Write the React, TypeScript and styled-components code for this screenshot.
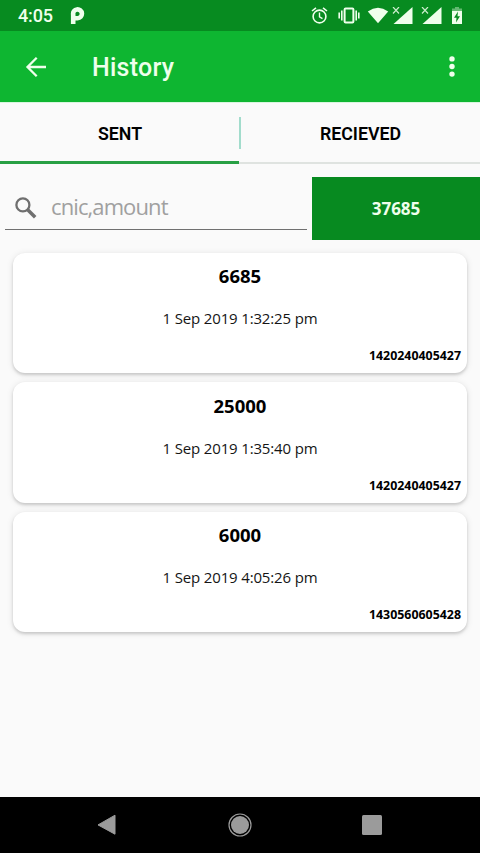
import React from 'react';
import styled, { createGlobalStyle } from 'styled-components';

const GlobalStyle = createGlobalStyle`
  * { box-sizing: border-box; }
  body { margin: 0; background: #fafafa; }
`;

const Screen = styled.div`
  display: flex;
  flex-direction: column;
  width: 480px;
  height: 853px;
  overflow: hidden;
  background: #fafafa;
  color: #000;
  font-family: 'Open Sans', 'Noto Sans', sans-serif;
`;

const StatusBar = styled.header`
  display: flex;
  align-items: center;
  height: 31px;
  flex: none;
  padding: 0 17px 0 18px;
  background: #078b20;
  color: #efffec;
`;

const Clock = styled.span`
  width: 52px;
  font: 500 18px/31px Roboto, sans-serif;
  letter-spacing: -0.15px;
`;

const StatusIcons = styled.div`
  display: flex;
  margin: 1px 0 0 auto;
`;

const Icon = styled.svg<{ $gap?: number }>`
  display: block;
  flex: none;
  margin-left: ${({ $gap = 0 }) => $gap}px;
`;

const AppBar = styled.div`
  display: flex;
  align-items: center;
  flex: none;
  height: 71px;
  padding: 0 22px 0 24px;
  background: #0eb631;
  color: #efffec;
`;

const Title = styled.h1`
  flex: 1;
  margin: 3px 0 0 44px;
  font: 500 25px/32px Roboto, sans-serif;
  letter-spacing: 0.25px;
`;

const IconButton = styled.button`
  display: flex;
  padding: 0;
  border: 0;
  background: none;
  color: inherit;
`;

const Tabs = styled.nav`
  display: grid;
  grid-template-columns: 239px 2px 239px;
  flex: none;
  height: 62px;
  border-top: 1px solid #d9f5df;
`;

const Tab = styled.button<{ $active?: boolean }>`
  padding: ${({ $active }) => ($active ? '3px 0 0 1px' : '3px 0 0')};
  border: 0;
  border-bottom: ${({ $active }) => ($active ? '3px solid #28a044' : '2px solid #dfe3e0')};
  background: none;
  color: #000;
  font: 600 17.8px/22px Roboto, sans-serif;
`;

const TabDivider = styled.div`
  border-bottom: 2px solid #dfe3e0;
  &::before {
    content: '';
    display: block;
    height: 32px;
    margin-top: 14px;
    background: #a2dccc;
  }
`;

const SearchRow = styled.div`
  display: flex;
  flex: none;
  height: 63px;
  margin-top: 13px;
`;

const SearchField = styled.label`
  display: flex;
  align-items: center;
  width: 302px;
  height: 53px;
  margin: 0 5px;
  padding: 8px 0 0 9px;
  border-bottom: 1px solid #707070;
`;

const SearchInput = styled.input`
  flex: 1;
  min-width: 0;
  height: 34px;
  margin: -2px 0 0 14px;
  padding: 0;
  border: 0;
  outline: 0;
  background: none;
  font: 400 22px/34px 'Open Sans', sans-serif;
  letter-spacing: -0.9px;
  &::placeholder { color: #a0a0a0; opacity: 1; }
`;

const Total = styled.div`
  flex: 1;
  background: #078a20;
  color: #efffec;
  font-size: 17px;
  font-weight: 700;
  line-height: 64px;
  text-align: center;
`;

const List = styled.main`
  display: flex;
  flex: 1;
  flex-direction: column;
  gap: 9px;
  padding: 13px 13px 0;
`;

const Card = styled.article`
  display: flex;
  flex-direction: column;
  align-items: center;
  height: 120.3px;
  border-radius: 12px;
  background: #fff;
  box-shadow: 0 2px 3px rgba(0, 0, 0, 0.15), 0 1px 7px rgba(0, 0, 0, 0.1);
`;

const Amount = styled.strong`
  margin-top: 10.4px;
  font-size: 18.5px;
  line-height: 26px;
`;

const SentAt = styled.time`
  margin-top: 18px;
  color: #151515;
  font-size: 15px;
  line-height: 22px;
  letter-spacing: -0.16px;
`;

const Cnic = styled.span`
  align-self: flex-end;
  margin: 18px 6px 0 0;
  font-size: 12.4px;
  font-weight: 700;
  line-height: 18px;
`;

const NavBar = styled.footer`
  display: flex;
  align-items: center;
  justify-content: space-between;
  flex: none;
  height: 56px;
  padding: 0 98px 0 97px;
  background: #000;
  color: #9b9b9b;
`;

const SignalIcon = ({ gap }: { gap: number }) => (
  <Icon $gap={gap} width="21" height="18" viewBox="0 0 21 18">
    <path d="M20.5 0V17H1.5Z" fill="currentColor" />
    <path d="M0 0H8.5V7.5L5 11H0Z" fill="#078b20" />
    <path d="M1 0l6 6.5M7 0L1 6.5" stroke="currentColor" strokeWidth="1.2" opacity=".85" />
  </Icon>
);

const records = [
  { amount: '6685', date: '1 Sep 2019 1:32:25 pm', cnic: '1420240405427' },
  { amount: '25000', date: '1 Sep 2019 1:35:40 pm', cnic: '1420240405427' },
  { amount: '6000', date: '1 Sep 2019 4:05:26 pm', cnic: '1430560605428' },
];

export default function App() {
  return (
    <Screen>
      <GlobalStyle />
      <StatusBar>
        <Clock>4:05</Clock>
        <Icon width="16" height="18" viewBox="0 0 16 18">
          <path d="M3.2 17V7.6A4.4 4.4 0 1 1 7.6 11.2H5" fill="none" stroke="currentColor" strokeWidth="4.6" />
        </Icon>
        <StatusIcons>
          <Icon width="17" height="18" viewBox="0 0 17 18" fill="none" stroke="currentColor">
            <circle cx="8.5" cy="9.5" r="6.4" strokeWidth="1.6" />
            <path d="M8.5 5.5v4.3l3 1.8" strokeWidth="1.4" />
            <path d="M1 4L5 .8M12 .8l4 3.2" strokeWidth="1.6" />
          </Icon>
          <Icon $gap={10} width="22" height="18" viewBox="0 0 22 18" fill="none" stroke="currentColor">
            <rect x="6.6" y="1.5" width="8.8" height="14" rx="1" strokeWidth="2" />
            <path d="M3.8 3.5v10M18.2 3.5v10" strokeWidth="1.6" />
            <path d="M1.2 5.5v6M20.8 5.5v6" strokeWidth="1.6" />
          </Icon>
          <Icon $gap={7} width="22" height="18" viewBox="0 0 22 18">
            <path d="M.8 4.4Q11-2.8 21.2 4.4L11 16.3Z" fill="currentColor" />
          </Icon>
          <SignalIcon gap={3} />
          <SignalIcon gap={8} />
          <Icon $gap={9} width="12" height="18" viewBox="0 0 12 18">
            <path d="M4 0h4v1.5h3V5H1V1.5h3z" fill="currentColor" opacity=".4" />
            <path d="M1 4h10v13H1z" fill="currentColor" />
            <path d="M7 4.5L3 10.8h2.5L5 15.5l4-6.3H6.5z" fill="#078b20" />
          </Icon>
        </StatusIcons>
      </StatusBar>

      <AppBar>
        <IconButton aria-label="Back">
          <Icon width="24" height="24" viewBox="0 0 24 24" fill="none" stroke="currentColor" strokeWidth="2.3">
            <path d="M22 12H3.5M12.7 2.8L3.5 12l9.2 9.2" />
          </Icon>
        </IconButton>
        <Title>History</Title>
        <IconButton aria-label="More options">
          <Icon width="12" height="24" viewBox="0 0 12 24" fill="currentColor">
            <circle cx="6" cy="3.9" r="2.7" />
            <circle cx="6" cy="11.5" r="2.7" />
            <circle cx="6" cy="19.1" r="2.7" />
          </Icon>
        </IconButton>
      </AppBar>

      <Tabs>
        <Tab $active>SENT</Tab>
        <TabDivider />
        <Tab>RECIEVED</Tab>
      </Tabs>

      <SearchRow>
        <SearchField>
          <Icon width="23" height="23" viewBox="0 0 23 23" fill="none" stroke="#6f6f6f">
            <circle cx="8.9" cy="8.9" r="6.5" strokeWidth="2.3" />
            <path d="M13.7 13.7L21.2 21.2" strokeWidth="3.5" />
          </Icon>
          <SearchInput placeholder="cnic,amount" />
        </SearchField>
        <Total>37685</Total>
      </SearchRow>

      <List>
        {records.map((r) => (
          <Card key={r.date}>
            <Amount>{r.amount}</Amount>
            <SentAt>{r.date}</SentAt>
            <Cnic>{r.cnic}</Cnic>
          </Card>
        ))}
      </List>

      <NavBar>
        <Icon width="20" height="24" viewBox="0 0 20 24">
          <path d="M18 2.2v19L1 11.9z" fill="currentColor" stroke="currentColor" strokeLinejoin="round" />
        </Icon>
        <Icon width="24" height="24" viewBox="0 0 24 24">
          <circle cx="12" cy="12" r="11" fill="none" stroke="currentColor" strokeWidth="1.2" />
          <circle cx="12" cy="12" r="9" fill="currentColor" />
        </Icon>
        <Icon width="20" height="20" viewBox="0 0 20 20">
          <rect width="20" height="20" rx="1.5" fill="currentColor" />
        </Icon>
      </NavBar>
    </Screen>
  );
}
